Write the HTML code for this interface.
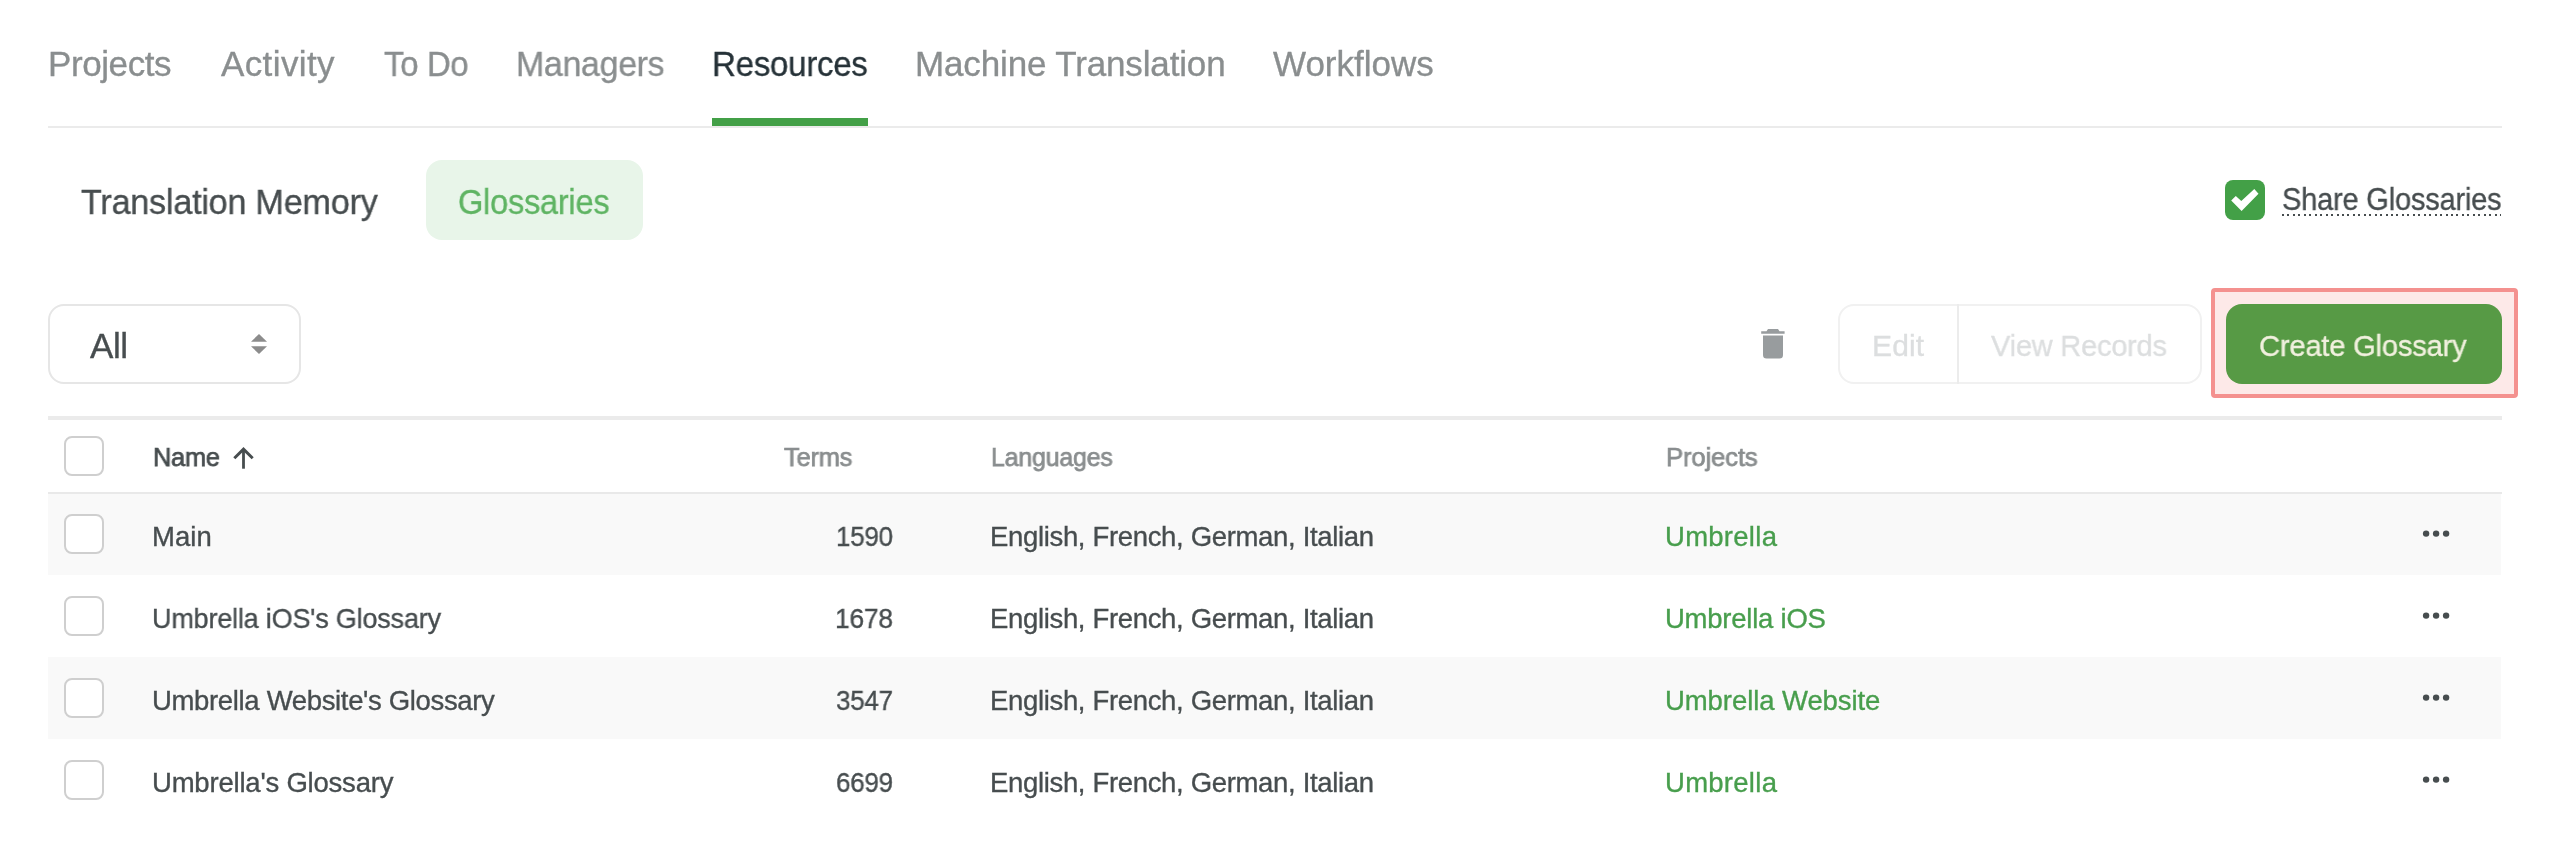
<!DOCTYPE html>
<html><head><meta charset="utf-8"><style>
html,body{margin:0;padding:0;background:#fff;width:2550px;height:868px;overflow:hidden;position:relative}
.t{position:absolute;font-family:'Liberation Sans',sans-serif;line-height:1;white-space:nowrap;will-change:transform;-webkit-text-stroke:0.35px currentColor}
</style></head><body>
<div style="position:absolute;left:48px;top:126px;width:2454px;height:2px;background:#ebebeb"></div>
<div style="position:absolute;left:712px;top:118px;width:156px;height:8px;background:#43a047"></div>
<div style="position:absolute;left:426px;top:160px;width:217px;height:80px;background:#e8f5e9;border-radius:16px"></div>
<svg style="position:absolute;left:2225px;top:180px" width="40" height="40" viewBox="0 0 40 40"><rect x="0" y="0" width="40" height="40" rx="8" fill="#43a047"/><polygon points="6.2,20.6 10.8,16 16.3,20.9 29.3,9.1 33.5,13.7 16.6,31" fill="#fff"/></svg>
<div style="position:absolute;left:2282px;top:214px;width:219px;height:2px;background-image:repeating-linear-gradient(90deg,#474d4f 0 2px,transparent 2px 5.45px)"></div>
<div style="position:absolute;left:48px;top:304px;width:253px;height:80px;box-sizing:border-box;border:2px solid #e6e6e6;border-radius:16px;background:#fff"></div>
<svg style="position:absolute;left:251px;top:334px" width="16" height="20" viewBox="0 0 16 20"><polygon points="0,7.7 8,0 16,7.7" fill="#8c8c8c"/><polygon points="0,12.3 16,12.3 8,20" fill="#8c8c8c"/></svg>
<svg style="position:absolute;left:1761px;top:329px" width="24" height="30" viewBox="0 0 24 30"><path d="M7 0 H17 L18.5 2.2 H23.6 V4.7 H0.2 V2.2 H5.5 Z" fill="#989c9e"/><path d="M2 6.6 H22 V26 A3.5 3.5 0 0 1 18.5 29.5 H5.5 A3.5 3.5 0 0 1 2 26 Z" fill="#989c9e"/></svg>
<div style="position:absolute;left:1838px;top:304px;width:364px;height:80px;box-sizing:border-box;border:2px solid #f1f1f1;border-radius:16px"></div>
<div style="position:absolute;left:1956.5px;top:304px;width:2px;height:80px;background:#ececec"></div>
<div style="position:absolute;left:2211px;top:288px;width:307px;height:110px;box-sizing:border-box;border:4px solid #f4918f;border-radius:4px;background:#fde9e8"></div>
<div style="position:absolute;left:2226px;top:304px;width:276px;height:80px;background:#579a45;border-radius:16px"></div>
<div style="position:absolute;left:48px;top:416px;width:2454px;height:4px;background:#ebebeb"></div>
<div style="position:absolute;left:64px;top:436px;width:40px;height:40px;box-sizing:border-box;border:2px solid #cfcfcf;border-radius:8px;background:#fff"></div>
<svg style="position:absolute;left:225px;top:440px" width="40" height="35" viewBox="0 0 40 35"><path d="M9.3 18.3 L18.5 9.1 L27.7 18.3" fill="none" stroke="#474d4f" stroke-width="2.9"/><path d="M18.5 9 V28.7" stroke="#474d4f" stroke-width="2.8"/></svg>
<div style="position:absolute;left:48px;top:492px;width:2454px;height:2px;background:#e9e9e9"></div>
<div style="position:absolute;left:48px;top:494px;width:2453px;height:81px;background:#f9f9f9"></div>
<div style="position:absolute;left:48px;top:657px;width:2453px;height:82px;background:#f9f9f9"></div>
<div style="position:absolute;left:64px;top:514px;width:40px;height:40px;box-sizing:border-box;border:2px solid #cfcfcf;border-radius:8px;background:#fff"></div>
<svg style="position:absolute;left:2422px;top:529px" width="30" height="10" viewBox="0 0 30 10"><circle cx="4.1" cy="4.6" r="3.2" fill="#474d4f"/><circle cx="14.1" cy="4.6" r="3.2" fill="#474d4f"/><circle cx="24.1" cy="4.6" r="3.2" fill="#474d4f"/></svg>
<div style="position:absolute;left:64px;top:596px;width:40px;height:40px;box-sizing:border-box;border:2px solid #cfcfcf;border-radius:8px;background:#fff"></div>
<svg style="position:absolute;left:2422px;top:611px" width="30" height="10" viewBox="0 0 30 10"><circle cx="4.1" cy="4.6" r="3.2" fill="#474d4f"/><circle cx="14.1" cy="4.6" r="3.2" fill="#474d4f"/><circle cx="24.1" cy="4.6" r="3.2" fill="#474d4f"/></svg>
<div style="position:absolute;left:64px;top:678px;width:40px;height:40px;box-sizing:border-box;border:2px solid #cfcfcf;border-radius:8px;background:#fff"></div>
<svg style="position:absolute;left:2422px;top:693px" width="30" height="10" viewBox="0 0 30 10"><circle cx="4.1" cy="4.6" r="3.2" fill="#474d4f"/><circle cx="14.1" cy="4.6" r="3.2" fill="#474d4f"/><circle cx="24.1" cy="4.6" r="3.2" fill="#474d4f"/></svg>
<div style="position:absolute;left:64px;top:760px;width:40px;height:40px;box-sizing:border-box;border:2px solid #cfcfcf;border-radius:8px;background:#fff"></div>
<svg style="position:absolute;left:2422px;top:775px" width="30" height="10" viewBox="0 0 30 10"><circle cx="4.1" cy="4.6" r="3.2" fill="#474d4f"/><circle cx="14.1" cy="4.6" r="3.2" fill="#474d4f"/><circle cx="24.1" cy="4.6" r="3.2" fill="#474d4f"/></svg>
<div class="t" style="left:47.90px;top:46.37px;font-size:35px;color:#8a8e8f;letter-spacing:-0.414px;">Projects</div>
<div class="t" style="left:220.60px;top:46.37px;font-size:35px;color:#8a8e8f;letter-spacing:0.386px;">Activity</div>
<div class="t" style="left:384.30px;top:46.37px;font-size:35px;color:#8a8e8f;letter-spacing:-0.337px;transform:scaleX(0.9397);transform-origin:0 0;">To Do</div>
<div class="t" style="left:515.69px;top:46.37px;font-size:35px;color:#8a8e8f;letter-spacing:-0.326px;transform:scaleX(0.9691);transform-origin:0 0;">Managers</div>
<div class="t" style="left:711.86px;top:46.37px;font-size:35px;color:#263238;letter-spacing:-0.306px;transform:scaleX(0.9455);transform-origin:0 0;">Resources</div>
<div class="t" style="left:914.60px;top:46.37px;font-size:35px;color:#8a8e8f;letter-spacing:-0.144px;">Machine Translation</div>
<div class="t" style="left:1273.00px;top:46.37px;font-size:35px;color:#8a8e8f;letter-spacing:0.000px;">Workflows</div>
<div class="t" style="left:81.20px;top:184.95px;font-size:35.5px;color:#474d4f;letter-spacing:-0.275px;transform:scaleX(0.9645);transform-origin:0 0;">Translation Memory</div>
<div class="t" style="left:458.38px;top:184.95px;font-size:35.5px;color:#5fb463;letter-spacing:-0.277px;transform:scaleX(0.9180);transform-origin:0 0;">Glossaries</div>
<div class="t" style="left:2281.78px;top:184.14px;font-size:31.5px;color:#474d4f;letter-spacing:-0.240px;transform:scaleX(0.9226);transform-origin:0 0;">Share Glossaries</div>
<div class="t" style="left:90.10px;top:328.17px;font-size:35px;color:#474d4f;letter-spacing:-0.450px;">All</div>
<div class="t" style="left:1871.60px;top:331.21px;font-size:30px;color:#dcdedf;letter-spacing:0.133px;">Edit</div>
<div class="t" style="left:1991.00px;top:331.21px;font-size:30px;color:#dcdedf;letter-spacing:-0.251px;transform:scaleX(0.9683);transform-origin:0 0;">View Records</div>
<div class="t" style="left:2259.43px;top:331.21px;font-size:30px;color:#f1f0de;letter-spacing:-0.231px;transform:scaleX(0.9729);transform-origin:0 0;">Create Glossary</div>
<div class="t" style="left:152.74px;top:443.57px;font-size:26.5px;color:#474d4f;letter-spacing:-0.345px;transform:scaleX(0.9593);transform-origin:0 0;-webkit-text-stroke:0.75px currentColor;">Name</div>
<div class="t" style="left:784.10px;top:443.57px;font-size:26.5px;color:#8a8e8f;letter-spacing:-0.270px;transform:scaleX(0.9631);transform-origin:0 0;-webkit-text-stroke:0.75px currentColor;">Terms</div>
<div class="t" style="left:990.86px;top:443.57px;font-size:26.5px;color:#8a8e8f;letter-spacing:-0.244px;transform:scaleX(0.9426);transform-origin:0 0;-webkit-text-stroke:0.75px currentColor;">Languages</div>
<div class="t" style="left:1665.63px;top:443.57px;font-size:26.5px;color:#8a8e8f;letter-spacing:-0.204px;transform:scaleX(0.9725);transform-origin:0 0;-webkit-text-stroke:0.75px currentColor;">Projects</div>
<div class="t" style="left:151.70px;top:522.72px;font-size:27.5px;color:#474d4f;letter-spacing:0.033px;">Main</div>
<div class="t" style="left:835.51px;top:522.72px;font-size:27.5px;color:#474d4f;letter-spacing:-0.295px;transform:scaleX(0.9464);transform-origin:0 0;">1590</div>
<div class="t" style="left:989.80px;top:522.72px;font-size:27.5px;color:#474d4f;letter-spacing:-0.332px;">English, French, German, Italian</div>
<div class="t" style="left:1664.60px;top:522.72px;font-size:27.5px;color:#489e4d;letter-spacing:0.271px;">Umbrella</div>
<div class="t" style="left:151.74px;top:604.72px;font-size:27.5px;color:#474d4f;letter-spacing:-0.202px;transform:scaleX(0.9824);transform-origin:0 0;">Umbrella iOS's Glossary</div>
<div class="t" style="left:835.47px;top:604.72px;font-size:27.5px;color:#474d4f;letter-spacing:-0.290px;transform:scaleX(0.9627);transform-origin:0 0;">1678</div>
<div class="t" style="left:989.80px;top:604.72px;font-size:27.5px;color:#474d4f;letter-spacing:-0.332px;">English, French, German, Italian</div>
<div class="t" style="left:1664.60px;top:604.72px;font-size:27.5px;color:#489e4d;letter-spacing:-0.236px;">Umbrella iOS</div>
<div class="t" style="left:151.70px;top:686.72px;font-size:27.5px;color:#474d4f;letter-spacing:-0.338px;">Umbrella Website's Glossary</div>
<div class="t" style="left:836.45px;top:686.72px;font-size:27.5px;color:#474d4f;letter-spacing:-0.295px;transform:scaleX(0.9464);transform-origin:0 0;">3547</div>
<div class="t" style="left:989.80px;top:686.72px;font-size:27.5px;color:#474d4f;letter-spacing:-0.332px;">English, French, German, Italian</div>
<div class="t" style="left:1664.60px;top:686.72px;font-size:27.5px;color:#489e4d;letter-spacing:-0.073px;">Umbrella Website</div>
<div class="t" style="left:151.70px;top:768.72px;font-size:27.5px;color:#474d4f;letter-spacing:-0.206px;">Umbrella's Glossary</div>
<div class="t" style="left:836.45px;top:768.72px;font-size:27.5px;color:#474d4f;letter-spacing:-0.295px;transform:scaleX(0.9464);transform-origin:0 0;">6699</div>
<div class="t" style="left:989.80px;top:768.72px;font-size:27.5px;color:#474d4f;letter-spacing:-0.332px;">English, French, German, Italian</div>
<div class="t" style="left:1664.60px;top:768.72px;font-size:27.5px;color:#489e4d;letter-spacing:0.271px;">Umbrella</div>
</body></html>
